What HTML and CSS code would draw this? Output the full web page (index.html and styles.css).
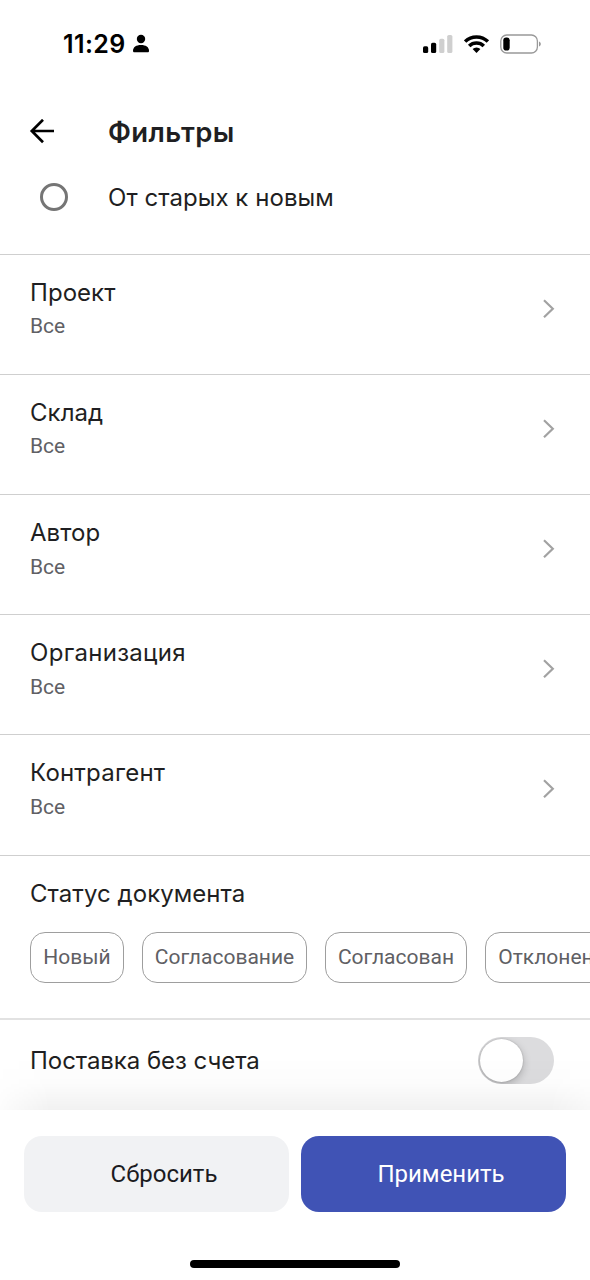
FILE: index.html
```html
<!DOCTYPE html>
<html lang="ru">
<head>
<meta charset="utf-8">
<title>Фильтры</title>
<link rel="stylesheet" href="styles.css">
</head>
<body>
<div class="screen">
  <header class="status-bar">
    <div class="status-left">
      <span class="clock">11:29</span>
      <svg class="person" width="18" height="20" viewBox="0 0 18 20"><circle cx="9" cy="5" r="4.2"/><path d="M1 16.800C1 13 4.200 10.900 9 10.900s8 2.100 8 5.900c0 1-.5 1.500-1.500 1.500h-13C1.500 18.300 1 17.800 1 16.800z"/></svg>
    </div>
    <div class="status-right">
      <svg width="30" height="20" viewBox="0 0 30 20"><rect x="0" y="12.300" width="5.200" height="6.700" rx="1.600"/><rect x="8" y="8.800" width="5.200" height="10.200" rx="1.600"/><g fill="#cfcfcf"><rect x="16.200" y="4.700" width="5.200" height="14.300" rx="1.600"/><rect x="24.200" y="1" width="5.200" height="18" rx="1.600"/></g></svg>
      <svg width="26" height="20" viewBox="0 0 26 20"><g fill="none" stroke="#000" stroke-width="3.500"><path d="M1.100 7.600a16.300 16.300 0 0 1 22.800 0"/><path d="M5.200 12.100a10.400 10.400 0 0 1 14.600 0"/></g><path d="M12.500 19l-3.900-3.900a5.500 5.500 0 0 1 7.800 0z"/></svg>
      <svg width="42" height="20" viewBox="0 0 42 20"><rect x=".8" y="1" width="36.600" height="18" rx="6" fill="none" stroke="#999" stroke-width="1.300"/><rect x="3.300" y="3.500" width="6.400" height="13" rx="2.800"/><path d="M39 7.500c2.400 1 2.400 4 0 5z" fill="#999"/></svg>
    </div>
  </header>

  <div class="title-bar">
    <svg class="back" width="26" height="26" viewBox="0 0 26 26"><path d="M25 12H2.800M14 .8L2.800 12 14 23.200"/></svg>
    <h1 class="title">Фильтры</h1>
  </div>

  <main class="content">
    <div class="sort-option">
      <span class="radio"></span>
      <span class="label sort-label">От старых к новым</span>
    </div>

    <div class="row"><div><div class="label">Проект</div><div class="value">Все</div></div><svg class="chevron" width="14" height="20" viewBox="0 0 14 20"><path d="M2 1.200l8.800 8.500L2 18.200"/></svg></div>
    <div class="row"><div><div class="label">Склад</div><div class="value">Все</div></div><svg class="chevron" width="14" height="20" viewBox="0 0 14 20"><path d="M2 1.200l8.800 8.500L2 18.200"/></svg></div>
    <div class="row"><div><div class="label">Автор</div><div class="value">Все</div></div><svg class="chevron" width="14" height="20" viewBox="0 0 14 20"><path d="M2 1.200l8.800 8.500L2 18.200"/></svg></div>
    <div class="row"><div><div class="label label-organization">Организация</div><div class="value">Все</div></div><svg class="chevron" width="14" height="20" viewBox="0 0 14 20"><path d="M2 1.200l8.800 8.500L2 18.200"/></svg></div>
    <div class="row"><div><div class="label label-contractor">Контрагент</div><div class="value">Все</div></div><svg class="chevron" width="14" height="20" viewBox="0 0 14 20"><path d="M2 1.200l8.800 8.500L2 18.200"/></svg></div>

    <section class="statuses">
      <div class="label label-status">Статус документа</div>
      <div class="chips">
        <span class="chip chip-new">Новый</span>
        <span class="chip chip-review">Согласование</span>
        <span class="chip chip-approved">Согласован</span>
        <span class="chip chip-rejected">Отклонен</span>
      </div>
    </section>

    <div class="toggle-row">
      <span class="label label-delivery">Поставка без счета</span>
      <span class="switch"><span class="knob"></span></span>
    </div>
  </main>

  <footer class="footer">
    <div class="buttons">
      <button class="button reset">Сбросить</button>
      <button class="button apply">Применить</button>
    </div>
    <div class="home-indicator"></div>
  </footer>
</div>
</body>
</html>
```
FILE: styles.css
```css
* { box-sizing: border-box; }
body { margin: 0; background: #fff; }
svg { display: block; flex: none; }
.screen {
  width: 590px;
  height: 1280px;
  overflow: hidden;
  display: flex;
  flex-direction: column;
  background: #fff;
  color: #1f1f22;
  font-family: Inter, "Noto Sans", sans-serif;
}
.status-bar {
  height: 88px;
  flex: none;
  display: flex;
  align-items: center;
  justify-content: space-between;
  padding: 0 48px 0 63px;
}
.status-left { display: flex; align-items: center; gap: 6px; }
.clock {
  color: #000;
  font-size: 25px;
  font-weight: 600;
  line-height: 30px;
  letter-spacing: .4px;
}
.status-right { display: flex; align-items: center; gap: 10.5px; }
.title-bar {
  height: 88px;
  flex: none;
  display: flex;
  align-items: center;
  padding-left: 29px;
}
.back { fill: none; stroke: #000; stroke-width: 2.7; }
.title {
  margin: 0 0 0 53px;
  font-size: 27.5px;
  font-weight: 600;
  line-height: 34px;
  letter-spacing: .4px;
}
.content { height: 934px; flex: none; }
.sort-option {
  height: 77.7px;
  display: flex;
  align-items: flex-start;
  padding: 7px 0 0 40px;
}
.radio {
  width: 28px;
  height: 28px;
  border: 3px solid #757575;
  border-radius: 50%;
}
.label {
  font-size: 24px;
  line-height: 30px;
  letter-spacing: .05px;
  white-space: nowrap;
}
.sort-label { margin-left: 40px; }
.label-organization { letter-spacing: .3px; }
.label-contractor { letter-spacing: .2px; }
.label-delivery { letter-spacing: -.05px; }
.row {
  height: 120.2px;
  border-top: 1px solid #cfcfcf;
  display: flex;
  justify-content: space-between;
  padding: 23px 34px 0 30px;
}
.value {
  margin-top: 5.5px;
  color: #606064;
  font: 21px/26px Roboto, sans-serif;
}
.chevron {
  margin-top: 21px;
  fill: none;
  stroke: #a2a2a2;
  stroke-width: 2.2;
}
.statuses {
  height: 163.3px;
  border-top: 1px solid #cfcfcf;
  padding: 23px 0 0 30px;
  overflow: hidden;
}
.chips { display: flex; gap: 18px; margin-top: 23px; }
.chip {
  flex: none;
  height: 51px;
  border: 1.5px solid #9e9e9e;
  border-radius: 15px;
  color: #606064;
  font: 21px/49px Roboto, sans-serif;
  text-align: center;
  white-space: nowrap;
}
.chip-new { width: 94px; }
.chip-review { width: 165px; }
.chip-approved { width: 142px; }
.chip-rejected { width: 122px; }
.toggle-row {
  height: 92px;
  border-top: 2px solid #e2e2e2;
  display: flex;
  align-items: flex-start;
  justify-content: space-between;
  padding: 17px 36px 0 30px;
}
.toggle-row .label { margin-top: 9px; }
.switch {
  width: 76.5px;
  height: 47px;
  padding: 2px;
  border-radius: 24px;
  background: #dcdcde;
  overflow: hidden;
}
.knob {
  display: block;
  width: 43px;
  height: 43px;
  border-radius: 50%;
  background: #fff;
  box-shadow: 0 3px 9px rgba(0, 0, 0, .22), 0 0 2px rgba(0, 0, 0, .2);
}
.footer {
  position: relative;
  flex: 1;
  padding: 26px 24px 0;
  background: #fff;
}
.footer::before {
  content: "";
  position: absolute;
  left: 0;
  right: 0;
  bottom: 100%;
  height: 54px;
  background: linear-gradient(rgba(0, 0, 0, 0), rgba(0, 0, 0, .012) 50%, rgba(0, 0, 0, .055));
  -webkit-mask-image: linear-gradient(90deg, rgba(0, 0, 0, .2), #000 50px, #000 550px, rgba(0, 0, 0, .5));
  mask-image: linear-gradient(90deg, rgba(0, 0, 0, .2), #000 50px, #000 550px, rgba(0, 0, 0, .5));
}
.buttons { display: grid; grid-template-columns: 1fr 1fr; gap: 12px; }
.button {
  height: 76px;
  border: 0;
  border-radius: 18px;
  padding: 0 0 0 15px;
  font: 24px/30px Roboto, sans-serif;
}
.reset { background: #f1f2f4; color: #1b1b1e; }
.apply { background: #4053b5; color: #fff; }
.home-indicator {
  width: 210px;
  height: 8px;
  margin: 48px auto 0;
  border-radius: 4px;
  background: #000;
}
```
